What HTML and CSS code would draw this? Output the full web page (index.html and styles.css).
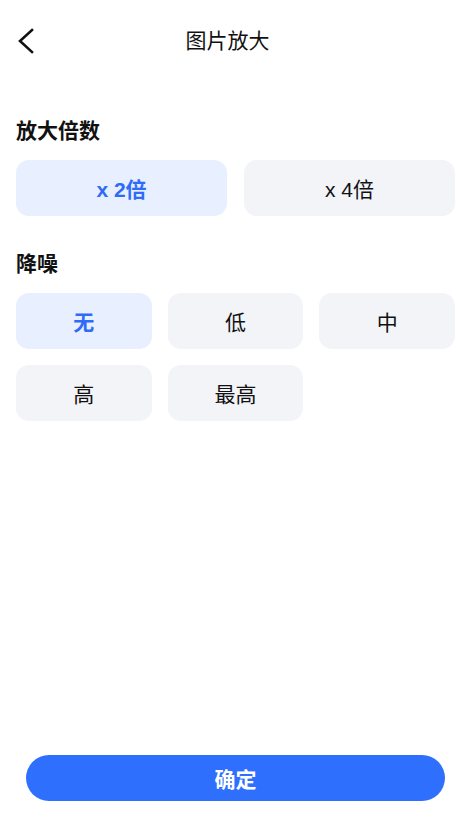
FILE: index.html
```html
<!DOCTYPE html>
<html lang="zh-CN">

<head>
    <meta charset="UTF-8">
    <meta name="viewport" content="width=device-width, initial-scale=1.0">
    <title>图片放大</title>
    <link rel="stylesheet" href="styles.css">
</head>

<body>
    <div class="page">
        <header class="nav-bar">
            <a class="back-btn" href="#">
                <svg width="20" height="28" viewBox="0 0 20 28">
                    <polyline points="16,3 4,14 16,25" fill="none" stroke="#111" stroke-width="2.6"
                        stroke-linecap="square" stroke-linejoin="miter" />
                </svg>
            </a>
            <h1 class="nav-title">图片放大</h1>
        </header>

        <section class="group">
            <h2 class="group-title">放大倍数</h2>
            <div class="options options-2">
                <button class="option active">x 2倍</button>
                <button class="option">x 4倍</button>
            </div>
        </section>

        <section class="group">
            <h2 class="group-title">降噪</h2>
            <div class="options options-3">
                <button class="option active">无</button>
                <button class="option">低</button>
                <button class="option">中</button>
                <button class="option">高</button>
                <button class="option">最高</button>
            </div>
        </section>

        <div class="footer">
            <button class="confirm-btn">确定</button>
        </div>
    </div>
</body>

</html>
```

FILE: styles.css
```css
* {
    box-sizing: border-box;
}

body {
    margin: 0;
    background-color: #fff;
    font-family: "Noto Sans CJK SC", "Noto Sans", sans-serif;
    color: #111;
}

.page {
    height: 821px;
    display: flex;
    flex-direction: column;
    padding: 0 16px;
}

.nav-bar {
    height: 82px;
    padding-bottom: 4px;
    display: flex;
    align-items: center;
    position: relative;
    justify-content: center;
}

.back-btn {
    position: absolute;
    left: 0;
    top: 27px;
    display: flex;
}

.nav-title {
    margin: 0 16px 0 0;
    font-size: 21px;
    font-weight: 400;
    line-height: 1;
    color: #111;
}

.group {
    margin-top: 33px;
}

.group + .group {
    margin-top: 32px;
}

.group-title {
    margin: 0 0 17px;
    font-size: 21px;
    font-weight: 700;
    line-height: 28px;
}

.options {
    display: grid;
    gap: 16px 16px;
}

.options-2 {
    grid-template-columns: 1fr 1fr;
    column-gap: 17px;
}

.options-3 {
    grid-template-columns: 1fr 1fr 1fr;
}

.option {
    height: 56px;
    border: none;
    border-radius: 13px;
    background-color: #f3f4f8;
    font-family: "Liberation Sans", "Noto Sans CJK SC", sans-serif;
    font-size: 21px;
    color: #111;
    padding: 0;
}

.option.active {
    background-color: #e8effe;
    color: #2f6bf6;
    font-weight: 700;
}

.footer {
    margin-top: auto;
    padding: 0 10px 20px;
}

.confirm-btn {
    width: 100%;
    height: 46px;
    border: none;
    border-radius: 23px;
    background-color: #2e6ffe;
    color: #fff;
    font-family: "Noto Sans CJK SC", sans-serif;
    font-size: 21px;
    font-weight: 700;
}
```
